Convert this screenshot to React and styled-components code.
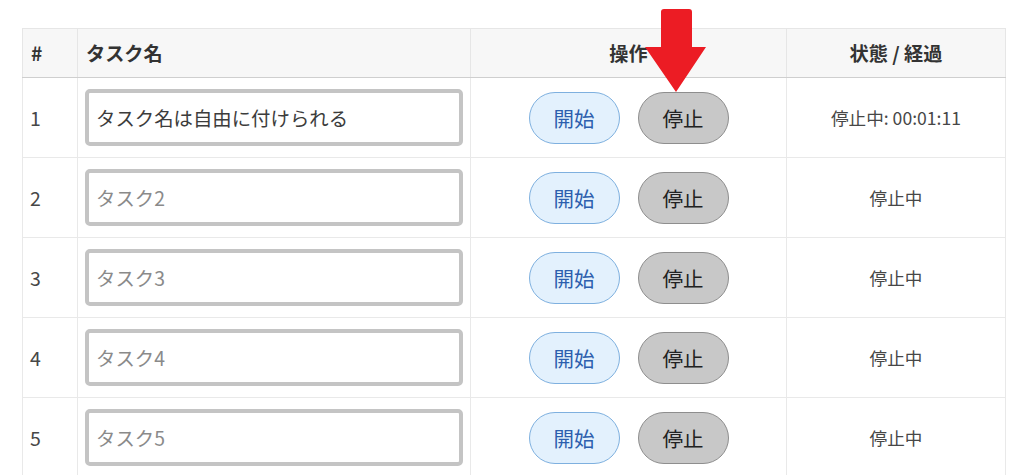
import React from "react";
import styled, { createGlobalStyle } from "styled-components";

const Global = createGlobalStyle`
  html, body { margin: 0; padding: 0; background: #fff; }
  body { font-family: "Noto Sans CJK JP", "Noto Sans", sans-serif; color: #333; }
`;

const Page = styled.div`
  position: relative;
  padding: 28px 19px 0 22px;
  width: 1024px;
  box-sizing: border-box;
`;

const Table = styled.table`
  width: 983px;
  border-collapse: collapse;
  table-layout: fixed;
`;

const Th = styled.th`
  background: #f7f7f7;
  border: 1px solid #e6e6e6;
  border-bottom: 1px solid #cfcfcf;
  height: 48px;
  padding: 0 8px;
  font-size: 19.2px;
  font-weight: 700;
  color: #333;
  text-align: ${(p) => p.$align || "left"};
`;

const Td = styled.td`
  border: 1px solid #e9e9e9;
  height: 80px;
  box-sizing: border-box;
  padding: 0 7px;
  vertical-align: middle;
  text-align: ${(p) => p.$align || "left"};
  font-size: ${(p) => p.$size || "19.5px"};
  color: #474747;
`;

const NameInput = styled.input`
  display: block;
  width: 100%;
  height: 57px;
  box-sizing: border-box;
  border: 4px solid #c4c4c4;
  border-radius: 5px;
  padding: 0 0 0 7px;
  font-family: inherit;
  font-size: 19.4px;
  color: #3c3c3c;
  background: #fff;
  outline: none;
  &::placeholder { color: #8a8a8a; }
`;

const Actions = styled.div`
  display: flex;
  justify-content: center;
  gap: 18px;
`;

const Pill = styled.button`
  width: 91px;
  height: 52px;
  border-radius: 26px;
  font-family: inherit;
  font-size: 20.5px;
  padding: 0;
  cursor: pointer;
  border: 1px solid ${(p) => (p.$variant === "start" ? "#7eb0df" : "#8e8e8e")};
  background: ${(p) => (p.$variant === "start" ? "#e3f1fd" : "#c8c8c8")};
  color: ${(p) => (p.$variant === "start" ? "#2d5fae" : "#222")};
`;

const Arrow = styled.svg`
  position: absolute;
  left: 644px;
  top: 8px;
`;

const rows = [
  { id: 1, value: "タスク名は自由に付けられる", status: "停止中: 00:01:11" },
  { id: 2, placeholder: "タスク2", status: "停止中" },
  { id: 3, placeholder: "タスク3", status: "停止中" },
  { id: 4, placeholder: "タスク4", status: "停止中" },
  { id: 5, placeholder: "タスク5", status: "停止中" },
];

export default function App() {
  return (
    <Page>
      <Global />
      <Table>
        <colgroup>
          <col style={{ width: 55 }} />
          <col style={{ width: 393 }} />
          <col style={{ width: 316 }} />
          <col style={{ width: 219 }} />
        </colgroup>
        <thead>
          <tr>
            <Th>#</Th>
            <Th>タスク名</Th>
            <Th $align="center">操作</Th>
            <Th $align="center">状態 / 経過</Th>
          </tr>
        </thead>
        <tbody>
          {rows.map((r) => (
            <tr key={r.id}>
              <Td>{r.id}</Td>
              <Td>
                <NameInput
                  defaultValue={r.value}
                  placeholder={r.placeholder}
                />
              </Td>
              <Td $align="center">
                <Actions>
                  <Pill $variant="start">開始</Pill>
                  <Pill $variant="stop">停止</Pill>
                </Actions>
              </Td>
              <Td $align="center" $size="17.6px">{r.status}</Td>
            </tr>
          ))}
        </tbody>
      </Table>
      <Arrow width="64" height="86" viewBox="0 0 64 86">
        <path
          d="M17 4 Q17 1 20 1 L45 1 Q48 1 48 4 L48 39 L62 39 L32 84 L1 39 L17 39 Z"
          fill="#ec1c24"
        />
      </Arrow>
    </Page>
  );
}
